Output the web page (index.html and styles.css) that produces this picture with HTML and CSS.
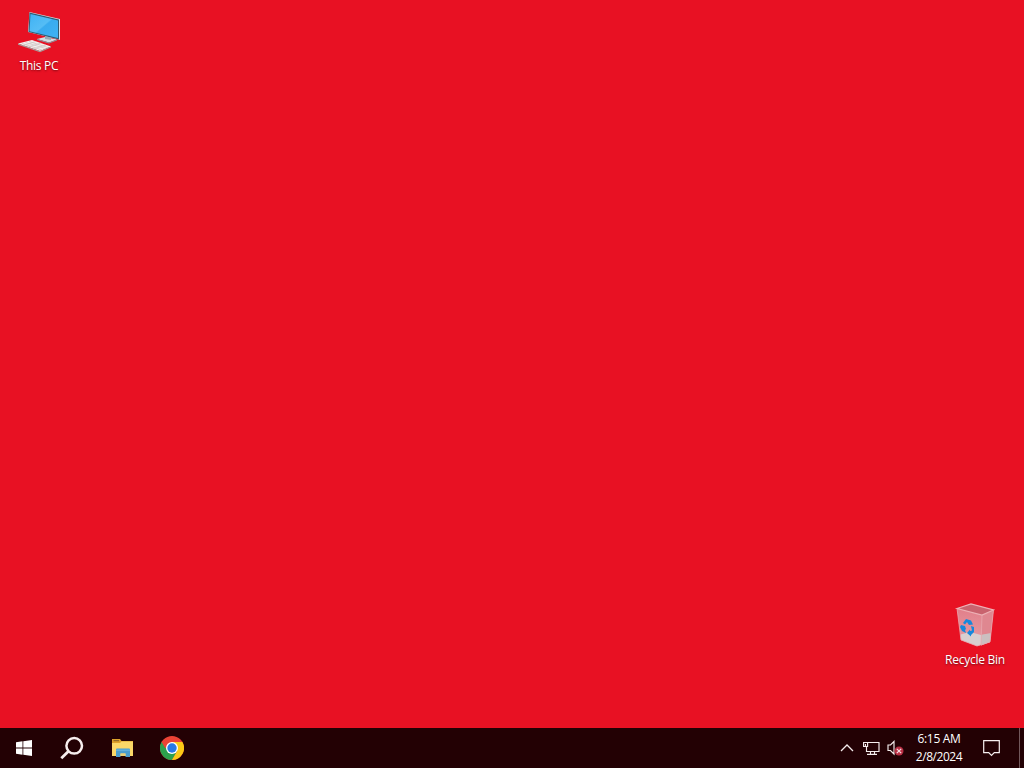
FILE: index.html
```html
<!DOCTYPE html>
<html lang="en">
<head>
    <meta charset="UTF-8">
    <title>Desktop</title>
    <link rel="stylesheet" href="styles.css">
</head>
<body>
    <main class="desktop">
        <div class="shortcut this-pc">
            <svg width="48" height="48" viewBox="0 0 48 48">
                <defs>
                    <linearGradient id="screen" x1="0" y1="0" x2="1" y2="1">
                        <stop offset="0" stop-color="#3fb2f4"/>
                        <stop offset=".48" stop-color="#55bdf5"/>
                        <stop offset=".52" stop-color="#38abef"/>
                        <stop offset="1" stop-color="#3fb3f5"/>
                    </linearGradient>
                </defs>
                <path d="M22 31l8-2 12 2.500-8 3z" fill="#d3dde2"/>
                <path d="M30 27l6 1v4l-6-1z" fill="#9aabb5"/>
                <path d="M22 31v1l12 3.500 8-3v-1l-8 3z" fill="#8797a0"/>
                <path d="M14.500 4l30.500 7v21l-1.500-.5L13 24z" fill="#d7e2e8"/>
                <path d="M14.500 4.500L44 11.500V31.500L13.500 24z" fill="#315a72"/>
                <path d="M15.500 6L43 12.500V30L14.500 23.200z" fill="url(#screen)"/>
                <path d="M3 35.500l14-3.500 19 6.500L25 43z" fill="#f4efed"/>
                <path d="M3 35.500v1.200l22 7.500 11-4.700v-1L25 43z" fill="#a79797"/>
                <path d="M7 35.500l20 6.500M10.500 34.500l20 6M14 33.500l19 6M8 37.500l13-4M13 39l13-4M18 41l13-4" fill="none" stroke="#cbc3c2" stroke-width=".7"/>
            </svg>
            <span class="label label-pc">This PC</span>
        </div>

        <div class="shortcut recycle-bin">
            <svg width="48" height="48" viewBox="0 0 48 48">
                <defs>
                    <linearGradient id="glass" x1="0" y1="0" x2="0" y2="1">
                        <stop offset="0" stop-color="#e27a86"/>
                        <stop offset=".7" stop-color="#e3959d"/>
                        <stop offset="1" stop-color="#dba5aa"/>
                    </linearGradient>
                </defs>
                <path d="M6 8.500L20 4l22.500 6L39 42l-13 4-16-6z" fill="url(#glass)"/>
                <path d="M6 8.500L20 4l22.500 6L31 15z" fill="#c9636e"/>
                <path d="M31 15l11.500-5L39 42l-9 3.500z" fill="#df8790"/>
                <path d="M9.500 34.500L19 32l11 3 9.500-1L39 42l-13 4-16-6z" fill="#d8cfd0"/>
                <path d="M30 35l9.700-2L39 42l-9 3.500z" fill="#cbbfc0"/>
                <path d="M6 8.500L20 4l22.500 6L31 15z" fill="none" stroke="#edb0b5" stroke-width="1.200"/>
                <path d="M31 15l-1 30M42.500 10L39 42l-13 4-16-6L6 8.500" fill="none" stroke="#e9a7ae" stroke-width=".8"/>
                <g fill="#1688dc">
                    <path d="M12 23l3-4 5 1.500 2 4-4 .5-2-3-2 2.500z"/>
                    <path d="M10 25l4 1 1 3-1 1 1 3-4-2-2-4z"/>
                    <path d="M20 26l3 1v5l-3 3v1.500L16 33l3-3.500v1.500l2-.5z"/>
                </g>
            </svg>
            <span class="label label-bin">Recycle Bin</span>
        </div>
    </main>

    <footer class="taskbar">
        <div class="pinned">
            <button class="start" title="Start">
                <svg width="16" height="16" viewBox="0 0 16 16" fill="#fff">
                    <path d="M0 2.200L6.500 1.300V7.500H0zM7.300 1.200L16 0V7.500H7.300zM0 8.400H6.500V14.700L0 13.800zM7.300 8.400H16V16L7.300 14.800z"/>
                </svg>
            </button>
            <button class="search" title="Search">
                <svg width="24" height="24" viewBox="0 0 24 24" fill="none" stroke="#f6eeee" stroke-width="2.500">
                    <circle cx="14.200" cy="9.800" r="7.800"/>
                    <path d="M8.500 15.300L1.300 22.300" stroke-width="2.800"/>
                </svg>
            </button>
            <button title="File Explorer">
                <svg width="22" height="18" viewBox="0 0 22 18">
                    <path d="M0 0h8l1.500 2H21v15H0z" fill="#dda12b"/>
                    <path d="M1.500 1.200h5.500v1H1.500z" fill="#805c26"/>
                    <path d="M0 4h8l1.500-1.500H21V17H0z" fill="#fbd768"/>
                    <path d="M4 10.500q0-1 1-1h12q1 0 1 1V18h-4.500v-3.500h-5V18H4z" fill="#4a9dcf"/>
                    <path d="M4 10.500h14v1.500H4z" fill="#62b0dd"/>
                    <path d="M8.500 14.500h5V17h-5z" fill="#e8cf7c"/>
                </svg>
            </button>
            <button title="Google Chrome">
                <svg width="24" height="24" viewBox="0 0 24 24">
                    <circle cx="12" cy="12" r="12" fill="#ea4335"/>
                    <path d="M1.600 6A12 12 0 0 0 12 24l5.200-9L12 12H5.100z" fill="#2ca14c"/>
                    <path d="M12 24A12 12 0 0 0 22.400 6H12l5.200 9z" fill="#fbc916"/>
                    <circle cx="12" cy="12" r="6" fill="#fff"/>
                    <circle cx="12" cy="12" r="4.700" fill="#2879e6"/>
                </svg>
            </button>
        </div>

        <div class="tray">
            <svg class="chevron" width="14" height="8" viewBox="0 0 14 8" fill="none" stroke="#f5eded" stroke-width="1.300">
                <path d="M1 7l6-6 6 6"/>
            </svg>
            <svg class="network" width="17" height="14" viewBox="0 0 17 14" fill="none" stroke="#f5eded" stroke-width="1.150">
                <path d="M4.500 1.500h11.500v9H3.500V5M7.500 10.500v2.500M11.500 10.500v2.500M4 13.400h10M.6 1.500h4v4h-4zM2.500 3v2"/>
            </svg>
            <svg class="volume" width="17" height="16" viewBox="0 0 17 16">
                <path d="M1 5h2.500l3.500-3.500v12.500L3.500 10.500H1z" fill="none" stroke="#f5eded" stroke-width="1.150"/>
                <circle cx="12" cy="11" r="4.500" fill="#b92f44"/>
                <path d="M9.800 8.800l4.400 4.400m0-4.400l-4.400 4.400" stroke="#f7dce0" stroke-width="1.200"/>
            </svg>
            <div class="clock">
                <span class="time">6:15 AM</span>
                <span class="date">2/8/2024</span>
            </div>
            <svg class="action-center" width="17" height="17" viewBox="0 0 17 17" fill="none" stroke="#f7f0f0" stroke-width="1.200">
                <path d="M.7.700h15.600v12h-5L8.500 15.500 5.700 12.700h-5z"/>
            </svg>
            <div class="show-desktop"></div>
        </div>
    </footer>
</body>
</html>
```
FILE: styles.css
```css
body {
    margin: 0;
    height: 768px;
    display: flex;
    flex-direction: column;
    overflow: hidden;
    background: #e81123;
    color: #fff;
    font-family: "Open Sans", "Noto Sans", sans-serif;
    font-size: 12px;
}

svg {
    display: block;
    flex: none;
}

/* desktop */
.desktop {
    position: relative;
    flex: 1;
}

.shortcut {
    position: absolute;
    width: 76px;
    display: flex;
    flex-direction: column;
    align-items: center;
}

.this-pc {
    left: 1px;
    top: 8px;
}

.recycle-bin {
    left: 937px;
    top: 600px;
}

.label {
    margin-top: 2px;
    line-height: 16px;
    white-space: nowrap;
    text-shadow: 0 1px 2px rgba(0, 0, 0, 0.5);
}

.label-pc {
    letter-spacing: -0.3px;
}

.label-bin {
    margin-top: 4px;
    letter-spacing: -0.25px;
}

/* taskbar */
.taskbar {
    height: 40px;
    display: flex;
    justify-content: space-between;
    background: #230104;
}

.pinned,
.tray {
    display: flex;
    align-items: center;
}

.pinned button {
    width: 49px;
    height: 40px;
    padding: 0;
    border: 0;
    display: flex;
    align-items: center;
    justify-content: center;
    background: none;
}

.pinned .start {
    width: 48px;
}

.pinned .search {
    width: 50px;
    padding-right: 2px;
}

.chevron {
    margin-right: 9px;
}

.network {
    margin-right: 7px;
}

.volume {
    margin-right: 12px;
}

.clock {
    width: 46px;
    margin-right: 21px;
    display: flex;
    flex-direction: column;
    align-items: center;
    line-height: 18px;
    white-space: nowrap;
}

.time {
    letter-spacing: -0.3px;
}

.date {
    letter-spacing: -0.45px;
}

.action-center {
    margin-right: 19px;
}

.show-desktop {
    width: 4px;
    height: 40px;
    border-left: 1px solid #71585b;
}
```
